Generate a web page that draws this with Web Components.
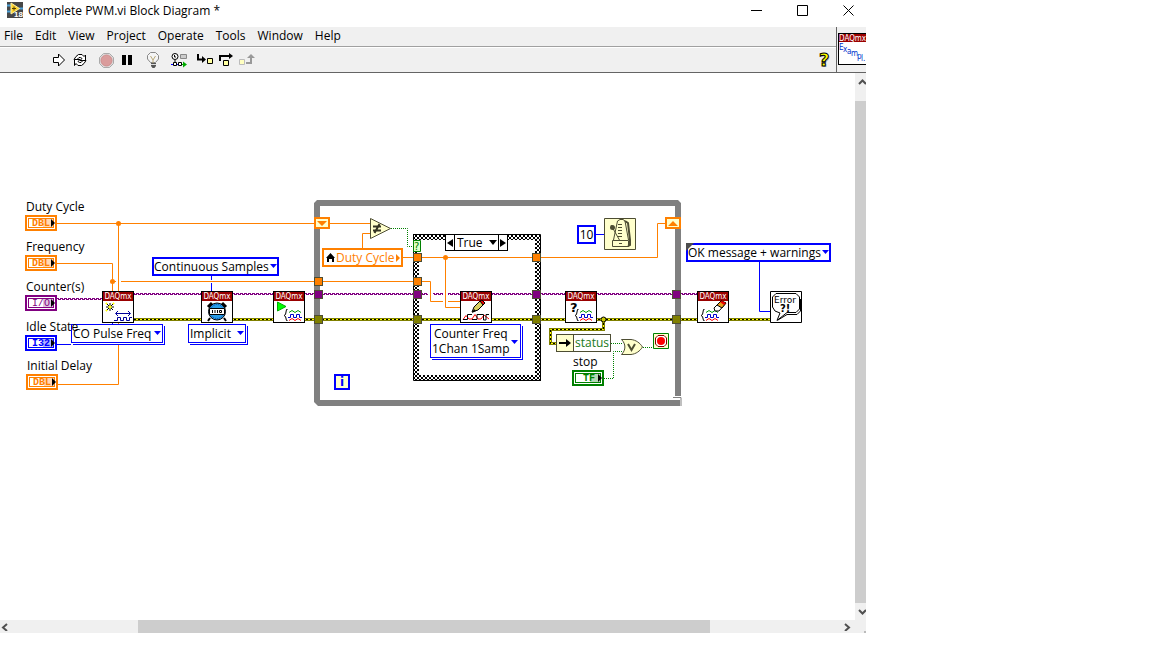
<!DOCTYPE html>
<html lang="en">
<head>
<meta charset="utf-8">
<title>Complete PWM.vi Block Diagram *</title>
<style>
  html, body { height: 100%; }
  body {
    margin: 0; box-sizing: border-box; padding: 0 286px 15px 0;
    background: #fff; color: #000;
    font: 12px/16px "Open Sans", "Noto Sans", sans-serif;
  }
</style>
</head>
<body>
<vi-window>
  <vi-titlebar slot="title">Complete PWM.vi Block Diagram *</vi-titlebar>
  <vi-menubar slot="menu" items="File,Edit,View,Project,Operate,Tools,Window,Help"></vi-menubar>
  <vi-toolbar slot="tools"></vi-toolbar>
  <vi-pane slot="pane"></vi-pane>
  <vi-diagram slot="canvas">
    <vi-daqmx x="102" y="291" art="create"></vi-daqmx>
    <vi-daqmx x="201" y="291" art="timing"></vi-daqmx>
    <vi-daqmx x="273" y="291" art="start"></vi-daqmx>
    <vi-daqmx x="460" y="291" art="write"></vi-daqmx>
    <vi-daqmx x="565" y="291" art="done"></vi-daqmx>
    <vi-daqmx x="697" y="291" art="clear"></vi-daqmx>

    <vi-ring x="152" y="257" w="127" label="Sample mode">Continuous Samples</vi-ring>
    <vi-ring x="686" y="243" w="145" label="Dialog type" coerced>OK message + warnings</vi-ring>
    <vi-ring x="71" y="324" w="92" label="Channel type" poly>CO Pulse Freq</vi-ring>
    <vi-ring x="188" y="324" w="58" label="Timing type" poly>Implicit</vi-ring>
    <vi-poly x="430" y="324">Counter Freq<br>1Chan 1Samp</vi-poly>

    <vi-terminal x="25" y="200" kind="dbl" code="DBL">Duty Cycle</vi-terminal>
    <vi-terminal x="25" y="240" kind="dbl" code="DBL">Frequency</vi-terminal>
    <vi-terminal x="25" y="280" kind="io" code="I/O">Counter(s)</vi-terminal>
    <vi-terminal x="25" y="320" kind="i32" code="I32">Idle State</vi-terminal>
    <vi-terminal x="26" y="359" kind="dbl" code="DBL">Initial Delay</vi-terminal>
    <vi-terminal x="572" y="355" kind="tf" code="TF">stop</vi-terminal>

    <vi-local x="322" y="248">Duty Cycle</vi-local>
    <vi-case x="445" y="234">True</vi-case>
    <vi-box x="577" y="225" class="num">10</vi-box>
    <vi-box x="334" y="374" class="iter">i</vi-box>
    <vi-unbundle x="556" y="334">status</vi-unbundle>
  </vi-diagram>
</vi-window>

<script>
const define = (name, html, setup, placed) => {
  const tpl = document.createElement('template');
  tpl.innerHTML = html;
  customElements.define(name, class extends HTMLElement {
    connectedCallback() {
      if (this.shadowRoot) return;
      const root = this.attachShadow({ mode: 'open' });
      root.append(tpl.content.cloneNode(true));
      if (placed) {
        this.style.left = this.getAttribute('x') + 'px';
        this.style.top = this.getAttribute('y') + 'px';
      }
      if (setup) setup(this, root);
    }
  });
};
/* Objects that sit at a free position on the diagram. */
const defineNode = (name, html, setup) => define(name,
  `<style>:host{position:absolute;display:block;box-sizing:border-box;white-space:nowrap}
   *{box-sizing:border-box} button{font:inherit;color:inherit;border:0;padding:0;background:none}</style>` + html, setup, true);

define('vi-window', `
<style>
  :host { display: grid; height: 100%; grid-template: 27px 46px minmax(0, 1fr) 13px / minmax(0, 1fr) 11px; overflow: hidden; }
  .title { grid-column: 1 / -1; }
  .head { grid-column: 1 / -1; display: grid; grid-template: 20px 1fr / minmax(0, 1fr) 30px; background: #f0f0f0; border-bottom: 1px solid #646464; }
  .menu { border-bottom: 1px solid #a0a0a0; }
  .tools { border-top: 1px solid #fff; }
  .pane { grid-area: 1 / 2 / 3 / 3; border-left: 1px solid #646464; }
</style>
<div class="title"><slot name="title"></slot></div>
<div class="head">
  <div class="menu"><slot name="menu"></slot></div>
  <div class="tools"><slot name="tools"></slot></div>
  <div class="pane"><slot name="pane"></slot></div>
</div>
<slot name="canvas"></slot>
<vi-scrollbar dir="v"></vi-scrollbar>
<vi-scrollbar dir="h"></vi-scrollbar>
<vi-grip></vi-grip>`);

define('vi-grip', `<style>:host{display:flex;background:#f0f0f0;align-items:flex-end;justify-content:flex-end} i{width:2px;height:2px;background:#bbb}</style><i></i>`);

define('vi-titlebar', `
<style>
  :host { display: flex; height: 27px; align-items: flex-start; background: #fff; }
  svg { display: block; }
  .logo { margin: 2px 5px 0 7px; }
  .name { flex: 1; padding-top: 3px; white-space: nowrap; }
  button { width: 46px; height: 20px; padding: 0; border: 0; background: none; display: grid; place-items: center; }
  .win { display: flex; margin-right: -5px; }
</style>
<svg class="logo" width="16" height="16" viewBox="0 0 16 16" aria-hidden="true">
  <rect width="16" height="16" fill="#474747"/><path d="M0 3.500H4M0 9.500H4M12 6.500H16" stroke="#4d9fd6" stroke-width="2"/>
  <path d="M4 1V12L12.500 6.500Z" fill="#ffd42e" stroke="#fff1a0"/><path d="M5 6.500H9M7 4.500V8.500" stroke="#554000"/>
  <text x="7" y="15" font-family="Liberation Sans" font-size="8" font-weight="700" fill="#fff">18</text>
</svg>
<span class="name"><slot></slot></span>
<span class="win">
  <button aria-label="Minimize"><svg width="11" height="11"><path d="M0 5.500H11" stroke="#000"/></svg></button>
  <button aria-label="Maximize"><svg width="11" height="11"><path d="M.5 .5H10.500V10.500H.5Z" fill="none" stroke="#000"/></svg></button>
  <button aria-label="Close"><svg width="11" height="11"><path d="M.5 .5L10.500 10.500M10.500 .5L.5 10.500" stroke="#000"/></svg></button>
</span>`);

define('vi-menubar', `
<style>
  :host { display: block; }
  nav { display: flex; gap: 12px; padding: 0 4px; }
  button { font: inherit; line-height: 18px; color: inherit; border: 0; padding: 0; background: none; }
</style><nav></nav>`, (el, root) => {
  for (const item of el.getAttribute('items').split(',')) {
    const b = document.createElement('button');
    b.textContent = item;
    root.querySelector('nav').append(b);
  }
});

define('vi-toolbar', `
<style>
  :host { display: flex; align-items: center; gap: 6px; height: 24px; padding: 0 2px 0 49px; }
  span { display: flex; gap: 1px; }
  button { width: 20px; height: 20px; padding: 0; border: 0; background: none; display: grid; place-items: center; }
  svg { display: block; overflow: visible; }
  .help { margin-left: auto; }
</style>
<span>
  <button aria-label="Run"><svg width="12" height="14" viewBox="0 0 12 14"><path d="M.5 4.500H5.500V1L11.500 7L5.500 13V9.500H.5Z" fill="#fff" stroke="#000"/></svg></button>
  <button aria-label="Run Continuously"><svg width="16" height="14" viewBox="0 0 16 14" fill="#fff" stroke="#000"><path d="M2 6.500L4 3.500L6.500 1.500H10L12 3.500L13.500 2V7.500H8L10 5.500L8.500 4.500H7L5 6.500Z"/><path d="M14 7.500L12 10.500L9.500 12.500H6L4 10.500L2.500 12.500V6.500H8L6 8.500L7.500 9.500H9L11 7.500Z"/></svg></button>
</span>
<span>
  <button aria-label="Abort"><svg width="15" height="15" viewBox="0 0 15 15"><path d="M4.500 .5H10.500L14.500 4.500V10.500L10.500 14.500H4.500L.5 10.500V4.500Z" fill="#ddd" stroke="#aaa"/><circle cx="7.500" cy="7.500" r="5.500" fill="#da9c9c" stroke="#cf8d8d"/></svg></button>
  <button aria-label="Pause"><svg width="10" height="10"><path d="M0 0H4V10H0ZM6 0H10V10H6Z"/></svg></button>
</span>
<span><button aria-label="Highlight Execution"><svg width="12" height="16" viewBox="0 0 12 16"><path d="M3.500 10.500L.5 7V3.500L3.500 .5H8.500L11.500 3.500V7L8.500 10.500Z" fill="#f4f4f4" stroke="#888"/><path d="M3.500 4L6 8L8.500 4M6 8V11" fill="none" stroke="#b8a878"/><path d="M4 11H9V14L7.500 16H5.500L4 14Z" fill="#555"/><path d="M4 12.500H9" stroke="#ddd"/></svg></button></span>
<span><button aria-label="Retain Wire Values"><svg width="16" height="14" viewBox="0 0 16 14"><circle cx="4" cy="3.500" r="3" fill="#fff" stroke="#000"/><path d="M3.500 2V4H5" fill="none" stroke="#000"/><path d="M4 7V9" stroke="#000"/><path d="M9.500 1.500H15.500V5.500H9.500Z" fill="#ccc" stroke="#888"/><path d="M0 11.500H3" stroke="#00f"/><path d="M2.500 9.500H5.500V12.500H2.500ZM7.500 9.500H10.500V12.500H7.500Z" fill="#fff" stroke="#000"/><path d="M6 11.500H7" stroke="#00f"/><path d="M11 11.500H13" stroke="#0a0"/><path d="M12 8.500L16 11.500L12 14.500Z" fill="#0a0"/></svg></button></span>
<span>
  <button aria-label="Step Into"><svg width="17" height="12" viewBox="0 0 17 12"><path d="M1 0V5.500H6" fill="none" stroke="#000" stroke-width="2"/><path d="M5 2L9 5.500L5 9Z"/><path d="M10.500 4.500H15.500V9.500H10.500Z" fill="#ffffa0" stroke="#000"/></svg></button>
  <button aria-label="Step Over"><svg width="15" height="13" viewBox="0 0 15 13"><path d="M1 7V2H11" fill="none" stroke="#000" stroke-width="2"/><path d="M10 -1L14 2L10 5Z"/><path d="M4.500 6.500H9.500V11.500H4.500Z" fill="#ffffa0" stroke="#000"/></svg></button>
  <button aria-label="Step Out"><svg width="16" height="12" viewBox="0 0 16 12"><path d="M.5 5.500H5.500V10.500H.5Z" fill="#ffffc0" stroke="#bbb"/><path d="M7 9H12V4" fill="none" stroke="#999" stroke-width="2"/><path d="M8 4H16L12 0Z" fill="#999"/></svg></button>
</span>
<button class="help" aria-label="Show Context Help"><svg width="12" height="18" viewBox="0 0 12 18"><text x="2" y="16" font-family="DejaVu Sans" font-weight="700" font-size="18" fill="#aaa">?</text><text x="1" y="15" font-family="DejaVu Sans" font-weight="700" font-size="18" fill="#ff0" stroke="#000" stroke-width="1">?</text></svg></button>`);

define('vi-pane', `
<style>:host{display:block;padding:6px 0 0 1px;overflow:hidden}
 div{height:32px;box-sizing:border-box;border:1px solid #000;border-right:0;background:#fff}
 b{display:block;height:8px;background:#900;color:#fff;font:8px/9px "DejaVu Sans Condensed","DejaVu Sans",sans-serif}
 svg{display:block}</style>
<div><b>DAQmx</b><svg width="27" height="22"><text font-family="DejaVu Sans Condensed, DejaVu Sans" font-size="8" fill="#0033cc" x="0 4 8 12 18 22 24" y="8 10 12 14 17 19 19">Exampl.</text></svg></div>`);

define('vi-scrollbar', `
<style>
  :host { display: flex; background: #f0f0f0; }
  :host([dir="v"]) { flex-direction: column; }
  .thumb { background: #cdcdcd; }
  button { border: 0; padding: 0; background: none; display: flex; flex: none; }
  svg { display: block; fill: none; stroke: #505050; stroke-width: 2; }
  :host([dir="v"]) button { height: 17px; width: 11px; padding-left: 3px; align-items: center; overflow: hidden; }
  :host([dir="h"]) button { width: 17px; height: 13px; align-items: center; padding: 0 3px 0 1px; }
  :host([dir="h"]) button:last-child { justify-content: flex-end; }
  :host([dir="v"]) .a { flex: 11; } :host([dir="v"]) .thumb { flex: 502; } :host([dir="v"]) .b { flex: 0; }
  :host([dir="h"]) .a { flex: 121; } :host([dir="h"]) .thumb { flex: 572; } :host([dir="h"]) .b { flex: 128; }
</style>
<button aria-label="Back"></button><i class="a"></i><i class="thumb"></i><i class="b"></i><button aria-label="Forward"></button>`, (el, root) => {
  const [back, fwd] = root.querySelectorAll('button');
  const arrow = d => `<svg width="8" height="8" viewBox="0 0 8 8"><path d="${d}"/></svg>`;
  const v = el.getAttribute('dir') === 'v';
  back.innerHTML = arrow(v ? 'M1 6L4.500 2.500L8 6' : 'M6 1L2 4.500L6 8');
  fwd.innerHTML = arrow(v ? 'M1 2L4.500 5.500L8 2' : 'M1 1L5 4.500L1 8');
});

/* The drawing surface: structures and wires below, nodes slotted on top. */
define('vi-diagram', `
<style>
  :host { display: block; position: relative; overflow: hidden; background: #fff; }
  .layer { position: absolute; left: 0; top: -73px; width: 100%; }
  svg { display: block; position: absolute; overflow: visible; }
  .o { stroke: #ff8000; fill: none; } .b { stroke: #0000ff; fill: none; }
  .g { stroke: #008000; fill: none; stroke-dasharray: 1 1; }
  .err { fill: none; stroke: #808000; stroke-width: 3; } .ey { fill: none; stroke: #ff0; } .ek { fill: none; stroke: #000; stroke-dasharray: 2 2; }
  .t rect { stroke: #4d4d33; }
</style>
<div class="layer">
<svg width="860" height="620" aria-hidden="true">
  <defs>
    <pattern id="hatch" width="4" height="4" patternUnits="userSpaceOnUse"><rect width="4" height="4" fill="#fff"/><path d="M0 0H1V1H0ZM3 0H4V1H3ZM1 1H3V3H1ZM0 3H1V4H0ZM3 3H4V4H3Z"/></pattern>
    <pattern id="wave" width="4" height="3" y="293" patternUnits="userSpaceOnUse"><path d="M0 0H3V1H0ZM0 1H1V2H0ZM2 1H4V2H2Z" fill="#800080"/></pattern>
  </defs>
  <path d="M317 200H678L681 203V396H675V206H320V400H680V406H318L314 402V203Z" fill="#808080"/>
  <path d="M673 397.500H681V406" fill="none" stroke="#808080"/>
  <path d="M413 234H541V381H413ZM419 240V375H535V240Z" fill="url(#hatch)" fill-rule="evenodd"/>
  <path d="M413.500 234.500H540.500V380.500H413.500Z" fill="none" stroke="#000"/>

  <path class="o" d="M57 223.500H314M118.500 223V384.500H58M57 263.500H112.500V291M112 281.500H116M121 281.500H314M330 223.500H370M362.500 248V233.500H370M403 257.500H413M422 257.500H532M445.500 257V307.500H460M323 281.500H413M422 281.500H430.500V301.500H443M448 301.500H460M541 257.500H657.500V223.500H665"/>
  <g fill="#ff8000"><circle cx="118.500" cy="223.500" r="2.500"/><circle cx="112.500" cy="281.500" r="2.500"/><circle cx="445.500" cy="257.500" r="2.500"/></g>
  <path d="M134 293H428V296H134ZM433 293H443V296H433ZM448 293H697V296H448Z" fill="url(#wave)"/>
  <g transform="translate(0 5)"><path d="M57 293H102V296H57Z" fill="url(#wave)"/></g>
  <path class="b" d="M57 344.500H71M112.500 323V325M211.500 276V280M211.500 283V291M596 234.500H604M759.500 262V311.500H770"/>
  <path class="err" d="M134 319.500H770M603.500 319V329.500H550.500V343.500H556"/><path class="ey" d="M134 319.500H770M603.500 319V329.500H550.500V343.500H556"/><path class="ek" d="M134 319.500H770M603.500 319V329.500H550.500V343.500H556"/>
  <circle cx="603.500" cy="319.500" r="2.500" fill="#cc0" stroke="#000"/>
  <path class="g" d="M391 228.500H407.500V246.500H413M611 343.500H623M643 347.500H653M604 378.500H613.500V351.500H623"/>

  <g class="t">
    <g fill="#ff8000"><rect x="314.500" y="277.500" width="8" height="8"/><rect x="413.500" y="253.500" width="8" height="8"/><rect x="413.500" y="277.500" width="8" height="8"/><rect x="532.500" y="253.500" width="8" height="8"/></g>
    <g fill="#800080"><rect x="314.500" y="290.500" width="8" height="8"/><rect x="413.500" y="290.500" width="8" height="8"/><rect x="532.500" y="290.500" width="8" height="8"/><rect x="672.500" y="290.500" width="8" height="8"/></g>
    <g fill="#808000"><rect x="314.500" y="315.500" width="8" height="8"/><rect x="413.500" y="315.500" width="8" height="8"/><rect x="532.500" y="315.500" width="8" height="8"/><rect x="672.500" y="315.500" width="8" height="8"/></g>
  </g>
  <g fill="#ffffcc" stroke="#ff8000" stroke-width="2"><path d="M315 218H329V228H315ZM666 218H680V228H666Z"/></g>
  <path d="M317 221H327L322 226ZM668 226H678L673 221Z" fill="#ff8000"/>
  <path d="M413.500 240.500H420.500V251.500H413.500Z" fill="#e0ffc8" stroke="#008000"/><text x="414" y="250" font-family="DejaVu Sans" font-size="10" fill="#008000">?</text>

  <path d="M370.500 218.500V238.500L390.500 228.500Z" fill="#ffffcc" stroke="#4d4d33"/>
  <path d="M373 226.500H381M373 230.500H381M379.500 224L374.500 233" stroke="#333322" stroke-width="2"/>

  <path d="M604.500 218.500H635.500V249.500H604.500Z" fill="#ffffcc" stroke="#4d4d33"/>
  <g fill="none" stroke="#4d4d33"><path d="M613.500 240L617.500 221L620 219.500H623L625 221L628.500 240"/><path d="M612.500 240.500H628.500V246.500H612.500ZM619 243.500H622" /><path d="M611 225L620 241"/><path d="M618 224.500H622M618 227.500H622M618 230.500H622M618 233.500H622M618 236.500H622"/><path d="M625 221L628 223L630 240V245L628 246" stroke-width="2"/></g>
  <circle cx="612.500" cy="227.500" r="2.500" fill="#4d4d33"/>

  <path d="M621.500 339.500H631C636 340 640 343 642.500 347C640 351 636 354 631 354.500H621.500C626 350 626 344 621.500 339.500Z" fill="#ffffcc" stroke="#4d4d33"/><path d="M628 344L631.500 350L635 344" fill="none" stroke="#4d4d33" stroke-width="2"/>
  <path d="M653.500 333.500H668.500V348.500H653.500Z" fill="#ffffcc" stroke="#008000"/><path d="M658 335.500H664L666.500 338V344L664 346.500H658L655.500 344V338Z" fill="#fff" stroke="#800000"/><circle cx="661" cy="341" r="4" fill="#f00"/>

  <g transform="translate(770 291)"><path d="M.5 .5H31.500V31.500H.5Z" fill="#fff" stroke="#000"/><path d="M6 2.500H26L29.500 6V18L26 21.500H17L7 29.500L10 22L5 20L2.500 16V6Z" fill="#fff" stroke="#000"/><path d="M8 29L17 23.500H27L30.500 20V8" fill="none" stroke="#000"/>
    <text x="4" y="12" font-family="DejaVu Sans" font-size="9">Error</text><text x="10" y="21" font-family="DejaVu Sans" font-weight="700" font-size="10">?!</text></g>
</svg>
<slot></slot>
</div>`);

const waves = '<g fill="none"><path d="M15 21.500L18 19.500L21 21.500L24 19.500L27 21.500" stroke="#090"/><path d="M14 26.500H16.500V23.500H19.500V26.500H22.500V23.500H25.500V26.500H28" stroke="#00c"/><path d="M15 29.500L18 27.500L21 29.500L24 27.500L27 29.500" stroke="#f00"/><path d="M13.500 18.500H12.500L11.500 23.500L10 24.500L11.500 25.500L12.500 29.500H13.500" stroke="#000"/></g>';
const art = {
  create: '<path d="M8 12V20M4 16H12M5 13L11 19M11 13L5 19" stroke="#000" stroke-width="1"/><path d="M7 15H9V17H7ZM4 12H5V13H4ZM11 12H12V13H11ZM4 19H5V20H4Z" fill="#ff0" stroke="#ff0"/><path d="M14 22.500H28M16 20L13.500 22.500L16 25M26 20L28.500 22.500L26 25" fill="none" stroke="#009"/><path d="M12 29.500H15.500V26.500H18.500V29.500H21.500V26.500H24.500V29.500H27.500V26.500H30" fill="none" stroke="#009"/>',
  timing: '<path d="M9 27L7 30M23 27L25 30" stroke="#000" stroke-width="2"/><circle cx="16" cy="20.500" r="8.500" fill="#2b9fe8" stroke="#000"/><circle cx="16" cy="20.500" r="7" fill="none" stroke="#003ca0" stroke-dasharray="1 1"/><path d="M7 16L11 12M25 16L21 12" stroke="#000" stroke-width="3"/><path d="M8.500 17.500H23.500V23.500H8.500Z" fill="#fff" stroke="#000"/><path d="M11.500 19V22M14 19V22M16.500 19V22M18.500 19.500H20.500V21.500H18.500Z" fill="none" stroke="#000"/>',
  start: '<path d="M4.500 11V20L13 15.500Z" fill="#0f0" stroke="#0a0"/>' + waves.replace('<g ', '<g transform="translate(1 0)" '),
  write: '<path d="M3 28.500L6 24.500L9 28L12 28L15 23.500L18 28L21 28L24 24L29 28" fill="none" stroke="#f00"/><path d="M3 28.500H7.500V23.500H12M12 28.500H17V23.500H23.500V29H26V23.500H29" fill="none" stroke="#000"/><path d="M12 21L14 16L20 10L24 13L18 19Z" fill="#d8d060" stroke="#000"/><path d="M20 10L22 9L25 12L23 14Z" fill="#e00" stroke="#000"/><path d="M12 22L14 18L16 20Z"/>',
  done: waves + '<text x="5" y="21" font-family="DejaVu Sans" font-size="13" font-weight="700">?</text>',
  clear: waves.replace('<g ', '<g transform="translate(-6 0)" ') + '<path d="M17 17L24 10L29 12L22 20H18Z" fill="#fff" stroke="#000"/><path d="M20 14L24 10L29 12L25 17Z" fill="#e8a020" stroke="#000"/><path d="M23 11L25 10L29 12L27 14Z" fill="#e00"/>'
};
defineNode('vi-daqmx', `
<style>:host{width:32px;height:32px;border:1px solid #000;background:#fff}
 b{display:block;height:9px;background:#900;color:#fff;font:8px/9px "DejaVu Sans Condensed","DejaVu Sans",sans-serif;text-align:center}
 svg{position:absolute;left:-1px;top:-1px}</style><b>DAQmx</b><svg width="32" height="32" aria-hidden="true"></svg>`,
  (el, root) => { root.querySelector('svg').innerHTML = art[el.getAttribute('art')]; });

defineNode('vi-terminal', `
<style>
 :host { --c: #ff8000; --l: #ffd9b3; }
 :host([kind="io"]) { --c: #800080; --l: #e0c4e0; } :host([kind="i32"]) { --c: #0000ff; --l: #b3b3ff; } :host([kind="tf"]) { --c: #008000; --l: #b3d9b3; }
 label { display: block; height: 15px; line-height: 14px; padding-left: 1px; }
 button { display: flex; width: 32px; height: 16px; border: 2px solid var(--c); background: #fff; position: relative; padding: 1px; }
 b { flex: 1; height: 10px; border: 1px solid var(--c); color: var(--c); font: 700 10px/10px "Liberation Mono", monospace; text-align: left; padding-left: 3px; background: linear-gradient(90deg, transparent 60%, var(--l) 60%); }
 :host([kind="io"]) b { font-weight: 400; }
 :host([kind="tf"]) b { padding-left: 7px; }
 svg { position: absolute; right: 0; top: 2px; }
</style><label for="t"><slot></slot></label><button id="t"><b></b><svg width="4" height="8"><path d="M0 0L4 4L0 8Z"/></svg></button>`,
  (el, root) => { root.querySelector('b').textContent = el.getAttribute('code'); });

defineNode('vi-ring', `
<style>
 :host { height: 19px; border: 2px solid #00f; background: #fff; }
 :host([poly]) { border-width: 1px; box-shadow: 1px 1px 0 #fff, 2px 2px 0 #00f; }
 select { appearance: none; display: block; width: 100%; height: 100%; border: 0; margin: 0; padding: 0; background: none; color: #000; font: inherit; line-height: 15px; }
 :host([poly]) select { padding-left: 1px; }
 svg { position: absolute; right: 0; top: 5px; }
 :host([poly]) svg { right: 1px; top: 6px; }
 svg.dot { display: none; }
 :host([coerced]) svg.dot { display: block; right: auto; left: -2px; top: -2px; }
</style><select><option></option></select><svg width="7" height="5"><path d="M0 0H7L3.500 4Z" fill="#00f"/></svg><svg class="dot" width="8" height="8"><path d="M0 0H8L0 8Z" fill="#4d4d4d"/></svg>`,
  (el, root) => {
    el.style.width = el.getAttribute('w') + 'px';
    root.querySelector('select').setAttribute('aria-label', el.getAttribute('label'));
    root.querySelector('option').textContent = el.textContent;
  });

defineNode('vi-poly', `
<style>:host{width:91px;height:34px;border:1px solid #00f;background:#fff;box-shadow:1px 1px 0 #fff,2px 2px 0 #00f}
 button{display:block;line-height:15px;padding:1px 0 0 1px;text-align:center} svg{position:absolute;right:2px;top:15px}</style>
<button aria-haspopup="listbox"><slot></slot></button><svg width="7" height="5"><path d="M0 0H7L3.500 4Z" fill="#00f"/></svg>`);

defineNode('vi-local', `
<style>:host{display:flex;align-items:center;gap:1px;width:81px;height:19px;border:2px solid #ff8000;background:#fff;color:#ff8000;padding:0 2px;line-height:15px}
 span{flex:1} svg{flex:none}</style>
<svg width="9" height="9"><path d="M4.500 0L9 5H8V9H6V6H3V9H1V5H0Z" fill="#000"/></svg><span><slot></slot></span><svg width="4" height="8"><path d="M0 0L4 4L0 8Z" fill="#ff8000"/></svg>`);

defineNode('vi-case', `
<style>:host{display:flex;width:63px;height:17px;border:1px solid #000;background:#fff}
 button{width:8px;display:grid;place-items:center} .mid{flex:1;position:relative;border:solid #000;border-width:0 1px}
 select{appearance:none;border:0;margin:0;padding:0 0 0 2px;background:none;font:inherit;color:#000;width:100%;height:15px;line-height:15px;display:block}
 .mid svg{position:absolute;right:1px;top:5px}</style>
<button aria-label="Previous case"><svg width="6" height="8"><path d="M6 0V8L0 4Z"/></svg></button>
<span class="mid"><select aria-label="Case"><option></option></select><svg width="8" height="5"><path d="M0 0H8L4 5Z"/></svg></span>
<button aria-label="Next case"><svg width="6" height="8"><path d="M0 0V8L6 4Z"/></svg></button>`,
  (el, root) => { root.querySelector('option').textContent = el.textContent; });

defineNode('vi-box', `
<style>:host{width:19px;height:19px;border:2px solid #00f;background:#fff;text-align:center;line-height:15px}
 :host(.iter){width:16px;height:16px;background:#ffffcc;color:#00f;font:700 12px/12px "DejaVu Sans",sans-serif}</style><slot></slot>`);

defineNode('vi-unbundle', `
<style>:host{display:flex;width:55px;height:18px;border:1px solid #4d4d33;background:#fff;color:#1a7a1a;line-height:16px}
 i{width:17px;background:#ffffcc;border-right:1px solid #4d4d33;display:grid;place-items:center} span{flex:1;text-align:center}</style>
<i><svg width="13" height="8"><path d="M0 3H7V0L12 4L7 8V5H0Z"/></svg></i><span><slot></slot></span>`);
</script>
</body>
</html>
